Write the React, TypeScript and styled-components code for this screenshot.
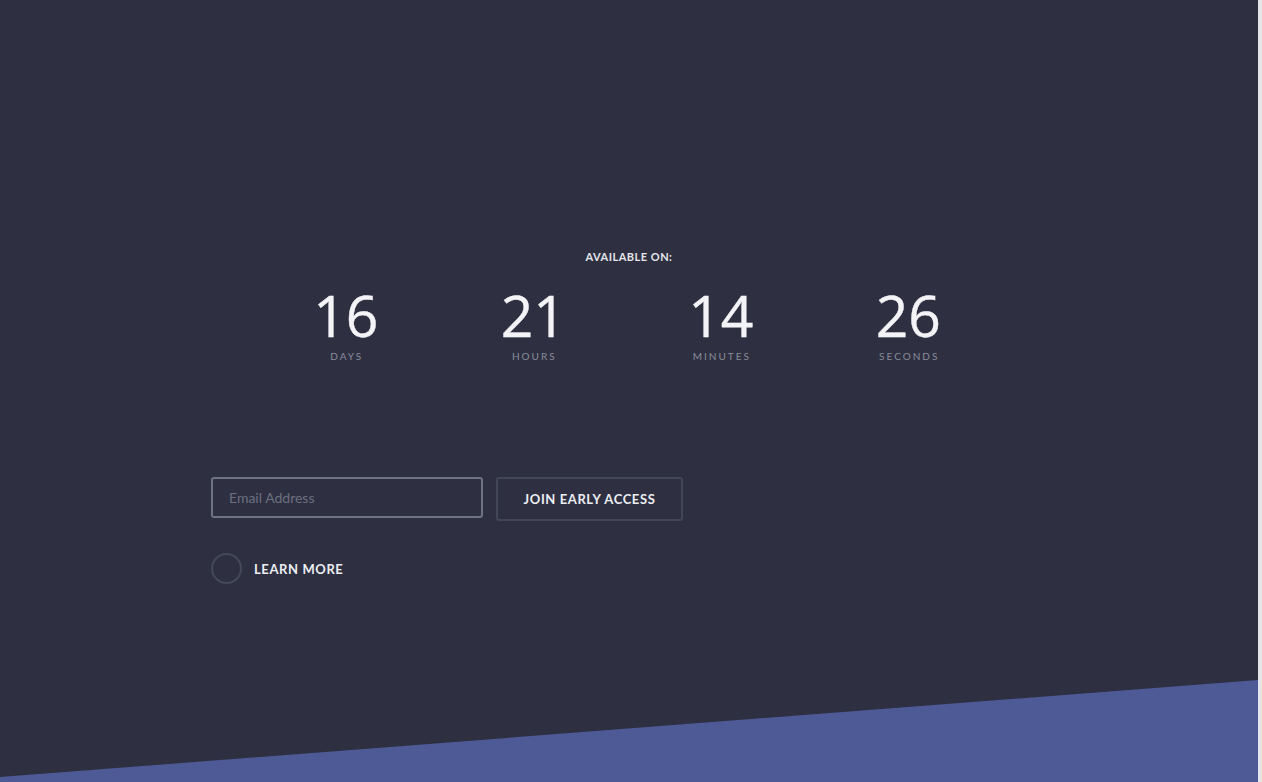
import React from "react";
import styled, { createGlobalStyle } from "styled-components";

const Global = createGlobalStyle`
  html, body { margin: 0; padding: 0; background: #e6e6ea; }
  body { font-family: "Lato", "Open Sans", sans-serif; }
  * { box-sizing: border-box; }
`;

const Page = styled.section`
  position: relative;
  width: 1258px;
  height: 782px;
  background: #2e3042;
  overflow: hidden;
`;

const Slant = styled.div`
  position: absolute;
  left: 0;
  right: 0;
  bottom: 0;
  height: 102px;
  background: #4d5a96;
  clip-path: polygon(0 97px, 100% 0, 100% 100%, 0 100%);
`;

const Inner = styled.div`
  width: 836px;
  margin: 0 auto;
  padding-top: 250px;
  display: flex;
  flex-direction: column;
`;

const Available = styled.div`
  text-align: center;
  font-family: "Lato", sans-serif;
  font-weight: 700;
  font-size: 11px;
  line-height: 14px;
  letter-spacing: 0.5px;
  color: #e4e5ea;
`;

const Countdown = styled.div`
  display: grid;
  grid-template-columns: repeat(4, 187.5px);
  justify-content: center;
  margin-top: 26px;
  margin-left: -4px;
`;

const Unit = styled.div`
  display: flex;
  flex-direction: column;
  align-items: center;
`;

const Num = styled.div`
  font-family: "Open Sans", sans-serif;
  font-weight: 400;
  font-size: 57px;
  line-height: 50px;
  color: #f4f4f7;
  -webkit-text-stroke: 0.4px #f4f4f7;
`;

const UnitLabel = styled.div`
  font-family: "Lato", sans-serif;
  font-size: 10px;
  line-height: 12px;
  letter-spacing: 2px;
  margin-left: 2px;
  color: #8a8c9a;
  margin-top: 10px;
`;

const Form = styled.form`
  display: flex;
  align-items: flex-start;
  gap: 13px;
  margin-top: 115px;
`;

const Email = styled.input`
  width: 272px;
  height: 41px;
  border: 2px solid #6f7282;
  border-radius: 3px;
  background: transparent;
  padding: 0 16px;
  font-family: "Lato", sans-serif;
  font-size: 14px;
  color: #e4e5ea;
  outline: none;
  &::placeholder { color: #6c6f7f; }
`;

const JoinButton = styled.button`
  width: 187px;
  height: 44px;
  border: 2px solid #434657;
  border-radius: 3px;
  background: transparent;
  font-family: "Lato", sans-serif;
  font-weight: 700;
  font-size: 13px;
  letter-spacing: 0.6px;
  color: #eceef2;
  cursor: pointer;
`;

const LearnRow = styled.a`
  display: flex;
  align-items: center;
  gap: 12px;
  margin-top: 32px;
  text-decoration: none;
  cursor: pointer;
`;

const Circle = styled.span`
  width: 31px;
  height: 31px;
  border-radius: 50%;
  border: 2px solid #454859;
`;

const LearnText = styled.span`
  font-family: "Lato", sans-serif;
  font-weight: 700;
  font-size: 13px;
  letter-spacing: 0.6px;
  color: #eceef2;
`;

const units = [
  { n: "16", l: "DAYS" },
  { n: "21", l: "HOURS" },
  { n: "14", l: "MINUTES" },
  { n: "26", l: "SECONDS" },
];

export default function App() {
  return (
    <>
      <Global />
      <Page>
        <Inner>
          <Available>AVAILABLE ON:</Available>
          <Countdown>
            {units.map((u) => (
              <Unit key={u.l}>
                <Num>{u.n}</Num>
                <UnitLabel>{u.l}</UnitLabel>
              </Unit>
            ))}
          </Countdown>
          <Form onSubmit={(e) => e.preventDefault()}>
            <Email type="email" placeholder="Email Address" />
            <JoinButton type="submit">JOIN EARLY ACCESS</JoinButton>
          </Form>
          <LearnRow>
            <Circle />
            <LearnText>LEARN MORE</LearnText>
          </LearnRow>
        </Inner>
        <Slant />
      </Page>
    </>
  );
}
